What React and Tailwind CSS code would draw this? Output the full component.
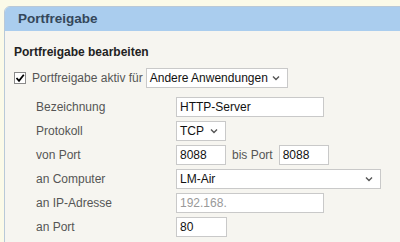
import React from "react";

const Chevron = () => (
  <svg width="8" height="6" viewBox="0 0 8 6" className="shrink-0">
    <path d="M1 1.5 L4 4.5 L7 1.5" fill="none" stroke="#555" strokeWidth="1.4" />
  </svg>
);

const Row = ({ label, children }) => (
  <div className="flex items-center h-[24px]">
    <div className="w-[140px] text-[#555]">{label}</div>
    {children}
  </div>
);

const Input = ({ value, width, muted }) => (
  <div
    className={`h-[20px] border border-[#c9c9c9] bg-white px-[3px] flex items-center ${width} ${
      muted ? "text-[#999]" : "text-[#111]"
    }`}
  >
    {value}
  </div>
);

const Select = ({ value, width }) => (
  <div
    className={`h-[20px] border border-[#c9c9c9] bg-white pl-[3px] pr-[7px] flex items-center justify-between text-[#111] ${width}`}
  >
    <span>{value}</span>
    <Chevron />
  </div>
);

const App = () => {
  return (
    <div
      className="w-[400px] h-[242px] overflow-hidden bg-[#fbfae8] pt-[6px] pl-[4px] text-[12px]"
      style={{ fontFamily: '"Liberation Sans", Arial, sans-serif' }}
    >
      <div className="w-[420px] h-[260px] rounded-tl-[6px] border border-[#b9c9d8] bg-[#f6f5f0] overflow-hidden">
        <div className="h-[24px] bg-[#aacdee] pl-[13px] flex items-center font-bold text-[13.5px] text-[#34475a]">
          Portfreigabe
        </div>
        <div className="pl-[9px] pt-[12px]">
          <div className="font-bold text-[12px] text-[#222]">Portfreigabe bearbeiten</div>
          <div className="flex items-center mt-[7px] h-[20px]">
            <div className="w-[12px] h-[12px] border border-[#8a8a8a] bg-white flex items-center justify-center">
              <svg width="10" height="10" viewBox="0 0 10 10">
                <path d="M1.5 5 L4 7.8 L8.8 1.8" fill="none" stroke="#000" strokeWidth="1.8" />
              </svg>
            </div>
            <span className="ml-[6px] text-[#555]">Portfreigabe aktiv für</span>
            <div className="ml-[3px]">
              <Select value="Andere Anwendungen" width="w-[142px]" />
            </div>
          </div>
          <div className="pl-[22px] mt-[7px]">
            <Row label="Bezeichnung">
              <Input value="HTTP-Server" width="w-[148px]" />
            </Row>
            <Row label="Protokoll">
              <Select value="TCP" width="w-[50px]" />
            </Row>
            <Row label="von Port">
              <Input value="8088" width="w-[50px]" />
              <span className="ml-[6px] mr-[6px] text-[#555]">bis Port</span>
              <Input value="8088" width="w-[50px]" />
            </Row>
            <Row label="an Computer">
              <Select value="LM-Air" width="w-[205px]" />
            </Row>
            <Row label="an IP-Adresse">
              <Input value="192.168." width="w-[148px]" muted />
            </Row>
            <Row label="an Port">
              <Input value="80" width="w-[51px]" />
            </Row>
          </div>
        </div>
      </div>
    </div>
  );
};

export default App;
